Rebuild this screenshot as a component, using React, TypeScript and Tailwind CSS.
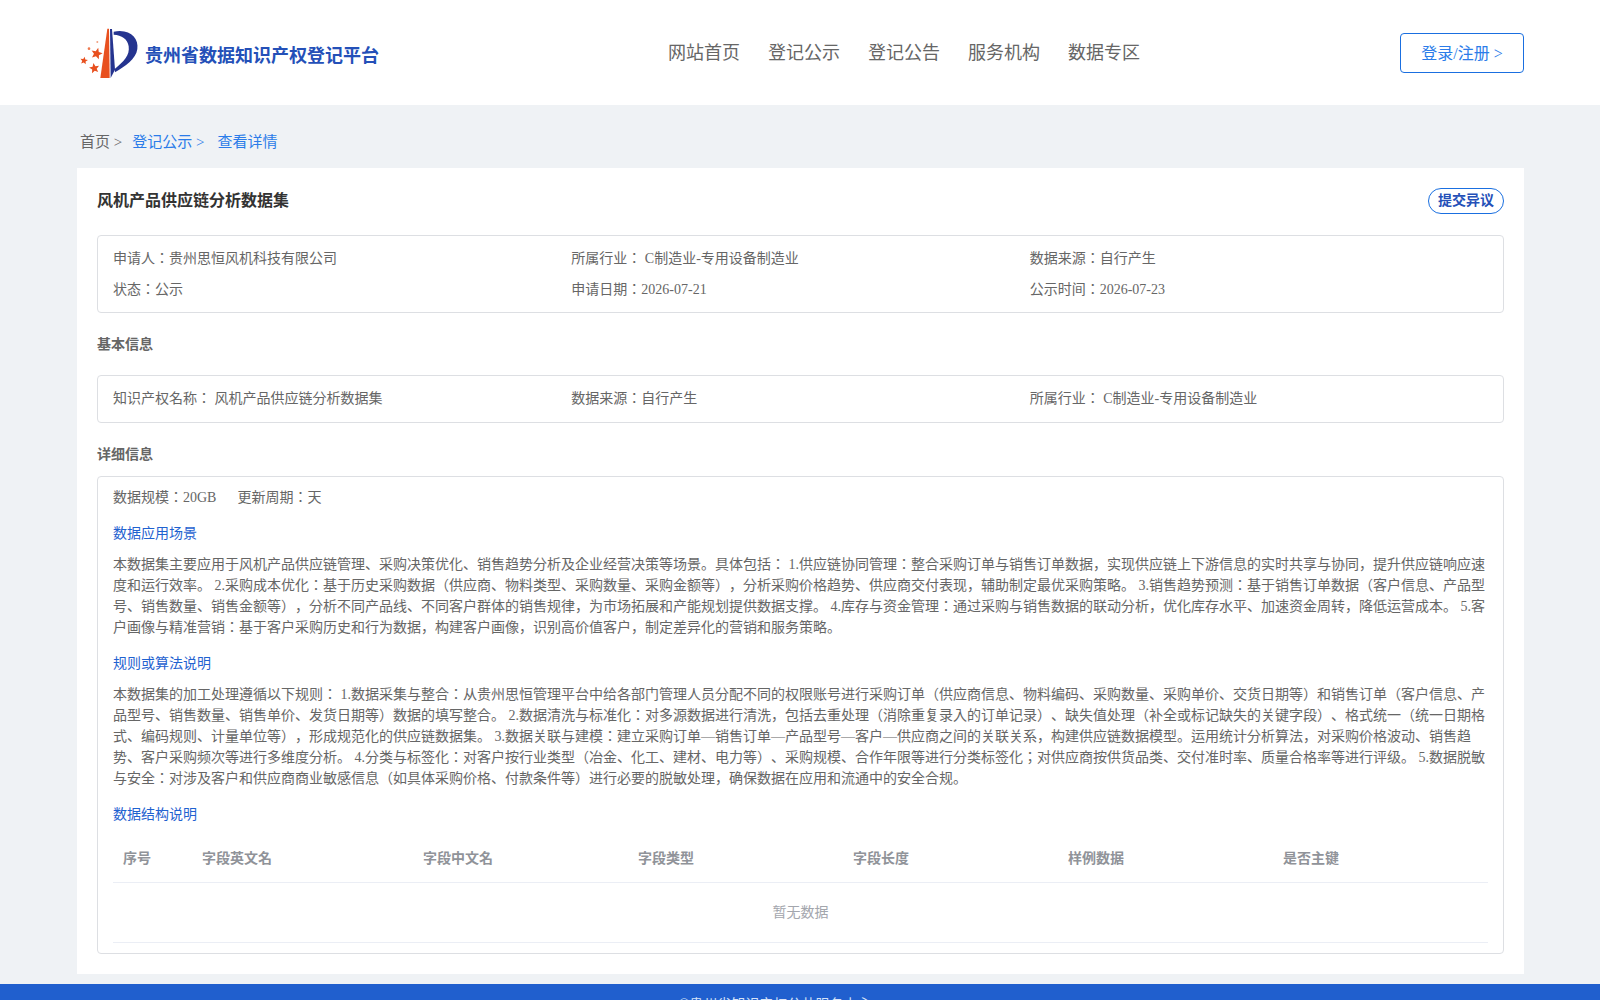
const FONT = 'font-["Liberation_Serif","Noto_Sans_CJK_JP",serif]';

const navItems = ['网站首页', '登记公示', '登记公告', '服务机构', '数据专区'];

const columns = ['序号', '字段英文名', '字段中文名', '字段类型', '字段长度', '样例数据', '是否主键'];

const starPoints = (cx: number, cy: number, r: number, rot: number) => {
  const pts: string[] = [];
  for (let i = 0; i < 10; i++) {
    const radius = i % 2 === 0 ? r : r * 0.45;
    const angle = ((-90 + rot + i * 36) * Math.PI) / 180;
    pts.push(`${(cx + radius * Math.cos(angle)).toFixed(1)},${(cy + radius * Math.sin(angle)).toFixed(1)}`);
  }
  return pts.join(' ');
};

const Logo = () => (
  <svg width="70" height="60" viewBox="0 0 210 180" className="shrink-0">
    <polygon points="97,17 102,17 104,165 76,165" fill="#e8501f" />
    <polygon points="105,18 111,18 120,140 107,165" fill="#25348f" />
    <path
      d="M116 26 C165 16 192 46 187 78 C183 108 150 130 120 148 L119 138 C146 116 165 98 161 70 C158 48 140 36 116 35 Z"
      fill="#25348f"
    />
    <polygon points={starPoints(65, 92, 18, 15)} fill="#e8501f" />
    <polygon points={starPoints(58, 136, 16, -10)} fill="#e8501f" />
    <polygon points={starPoints(27, 113, 12, 10)} fill="#e8501f" />
    <circle cx="42" cy="77" r="4" fill="#ee7a50" />
    <circle cx="67" cy="57" r="3" fill="#f0a080" />
  </svg>
);

const InfoGrid = ({ rows, className = '' }: { rows: string[][]; className?: string }) => (
  <div className={`rounded-[4px] border border-[#dddfe3] px-[15px] pt-[7px] text-[14px] leading-[31px] text-[#666666] ${className}`}>
    {rows.map((row, i) => (
      <div key={i} className="grid grid-cols-3">
        {row.map((cell) => (
          <div key={cell}>{cell}</div>
        ))}
      </div>
    ))}
  </div>
);

const SectionLink = ({ children }: { children: string }) => (
  <h4 className="mt-[16px] text-[14px] leading-5 font-normal text-[#1f62d0]">{children}</h4>
);

const App = () => {
  return (
    <div className={`${FONT} min-h-screen bg-[#eff2f5] [text-spacing-trim:space-all]`}>
      <header className="flex h-[105px] items-center bg-white pr-[76px] pl-[75px]">
        <Logo />
        <span className="w-[234px] pt-[7px] text-[18px] leading-6 font-bold whitespace-nowrap text-[#2450b8]">
          贵州省数据知识产权登记平台
        </span>
        <nav className="ml-[289px] flex gap-[28px] text-[18px] leading-6 text-[#666666]">
          {navItems.map((item) => (
            <a key={item} href="#">
              {item}
            </a>
          ))}
        </nav>
        <button
          type="button"
          className="ml-auto h-[40px] w-[124px] rounded-[4px] border border-[#1a6fe0] pt-[2px] text-[16px] text-[#2b7ce9]"
        >
          登录/注册 &gt;
        </button>
      </header>

      <div className="flex h-[63px] items-start px-[80px] pt-[25px] text-[15px] leading-6">
        <span className="text-[#666666]">首页 &gt;</span>
        <span className="ml-[10px] text-[#2b7ce9]">登记公示 &gt;</span>
        <span className="ml-[13px] text-[#2b7ce9]">查看详情</span>
      </div>

      <main className="mr-[76px] ml-[77px] bg-white px-5 pt-5 pb-5">
        <div className="flex h-[26px] items-center justify-between">
          <h1 className="text-[16px] leading-6 font-bold text-[#333333]">风机产品供应链分析数据集</h1>
          <button
            type="button"
            className="h-[26px] rounded-[13px] border border-[#1a6fe0] px-[9px] text-[14px] leading-5 font-bold text-[#2450b8]"
          >
            提交异议
          </button>
        </div>

        <div className="mt-[21px]">
          <InfoGrid
            className="pb-[7px]"
            rows={[
              ['申请人：贵州思恒风机科技有限公司', '所属行业： C制造业-专用设备制造业', '数据来源：自行产生'],
              ['状态：公示', '申请日期：2026-07-21', '公示时间：2026-07-23'],
            ]}
          />
        </div>

        <h3 className="mt-[20px] mb-[18px] text-[14px] leading-6 font-bold text-[#666666]">基本信息</h3>
        <InfoGrid
          className="pb-[8px]"
          rows={[['知识产权名称： 风机产品供应链分析数据集', '数据来源：自行产生', '所属行业： C制造业-专用设备制造业']]}
        />

        <h3 className="mt-[20px] mb-[9px] text-[14px] leading-6 font-bold text-[#666666]">详细信息</h3>
        <div className="rounded-[4px] border border-[#dddfe3] px-[15px] pt-[11px] pb-[10px] text-[14px] text-[#666666]">
          <div className="flex gap-[21px] leading-5">
            <span>数据规模：20GB</span>
            <span>更新周期：天</span>
          </div>

          <SectionLink>数据应用场景</SectionLink>
          <p className="mt-[10px] leading-[21px]">
            本数据集主要应用于风机产品供应链管理、采购决策优化、销售趋势分析及企业经营决策等场景。具体包括： 1.供应链协同管理：整合采购订单与销售订单数据，实现供应链上下游信息的实时共享与协同，提升供应链响应速度和运行效率。 2.采购成本优化：基于历史采购数据（供应商、物料类型、采购数量、采购金额等），分析采购价格趋势、供应商交付表现，辅助制定最优采购策略。 3.销售趋势预测：基于销售订单数据（客户信息、产品型号、销售数量、销售金额等），分析不同产品线、不同客户群体的销售规律，为市场拓展和产能规划提供数据支撑。 4.库存与资金管理：通过采购与销售数据的联动分析，优化库存水平、加速资金周转，降低运营成本。 5.客户画像与精准营销：基于客户采购历史和行为数据，构建客户画像，识别高价值客户，制定差异化的营销和服务策略。
          </p>

          <SectionLink>规则或算法说明</SectionLink>
          <p className="mt-[10px] leading-[21px]">
            本数据集的加工处理遵循以下规则： 1.数据采集与整合：从贵州思恒管理平台中给各部门管理人员分配不同的权限账号进行采购订单（供应商信息、物料编码、采购数量、采购单价、交货日期等）和销售订单（客户信息、产品型号、销售数量、销售单价、发货日期等）数据的填写整合。 2.数据清洗与标准化：对多源数据进行清洗，包括去重处理（消除重复录入的订单记录）、缺失值处理（补全或标记缺失的关键字段）、格式统一（统一日期格式、编码规则、计量单位等），形成规范化的供应链数据集。 3.数据关联与建模：建立采购订单—销售订单—产品型号—客户—供应商之间的关联关系，构建供应链数据模型。运用统计分析算法，对采购价格波动、销售趋势、客户采购频次等进行多维度分析。 4.分类与标签化：对客户按行业类型（冶金、化工、建材、电力等）、采购规模、合作年限等进行分类标签化；对供应商按供货品类、交付准时率、质量合格率等进行评级。 5.数据脱敏与安全：对涉及客户和供应商商业敏感信息（如具体采购价格、付款条件等）进行必要的脱敏处理，确保数据在应用和流通中的安全合规。
          </p>

          <SectionLink>数据结构说明</SectionLink>
          <div className="mt-[9px]">
            <div className="grid h-[49px] grid-cols-[79px_221px_repeat(5,215px)] items-center border-b border-[#ebeef5] font-bold text-[#909399]">
              {columns.map((col) => (
                <div key={col} className="px-[10px]">
                  {col}
                </div>
              ))}
            </div>
            <div className="flex h-[60px] items-center justify-center border-b border-[#ebeef5] text-[#a3a6ad]">暂无数据</div>
          </div>
        </div>
      </main>

      <footer className="mt-[10px] h-[60px] bg-[#205fce] pt-[11px] pr-[50px] text-center text-[14px] leading-5 text-[#d6e2f7]">
        ©贵州省知识产权公共服务中心
      </footer>
    </div>
  );
};

export default App;
